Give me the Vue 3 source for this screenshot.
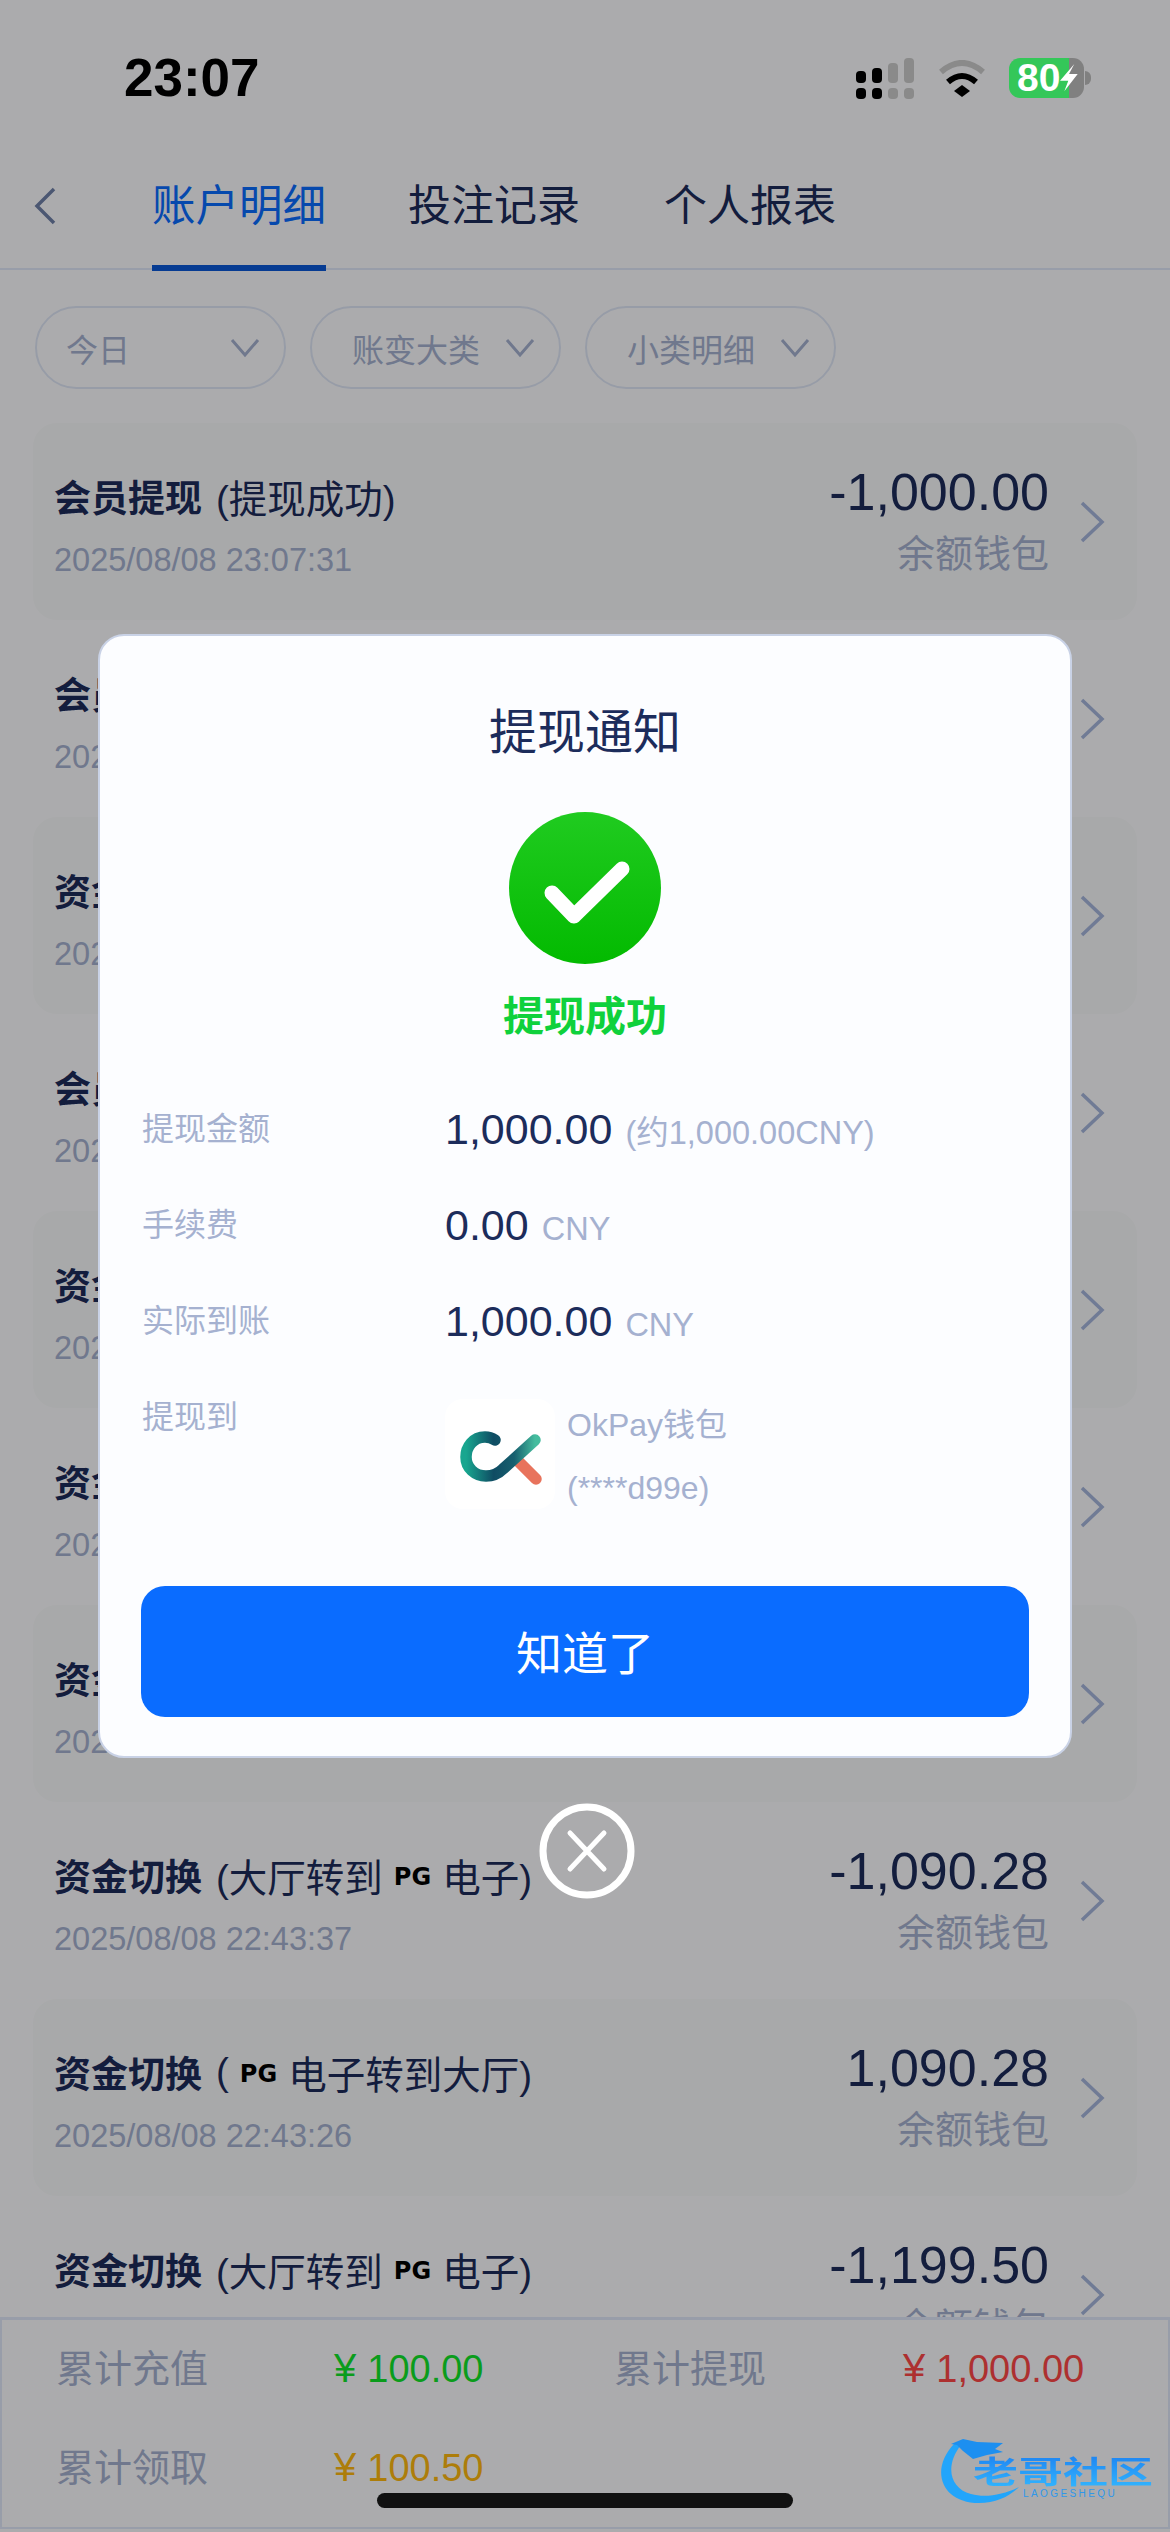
<script setup>
const tabs = ['账户明细', '投注记录', '个人报表']
const filters = ['今日', '账变大类', '小类明细']

const records = [
  { name: '会员提现', before: '(提现成功)', time: '2025/08/08 23:07:31', amount: '-1,000.00' },
  { name: '会员提现', before: '(提现成功)', time: '2025/08/08 22:58:12', amount: '-1,000.00' },
  { name: '资金切换', before: '(', pg: true, after: '电子转到大厅)', time: '2025/08/08 22:56:40', amount: '1,000.00' },
  { name: '会员提现', before: '(提现成功)', time: '2025/08/08 22:53:02', amount: '-1,000.00' },
  { name: '资金切换', before: '(大厅转到', pg: true, after: '电子)', time: '2025/08/08 22:49:51', amount: '-1,000.00' },
  { name: '资金切换', before: '(', pg: true, after: '电子转到大厅)', time: '2025/08/08 22:47:18', amount: '1,090.28' },
  { name: '资金切换', before: '(大厅转到', pg: true, after: '电子)', time: '2025/08/08 22:45:09', amount: '-1,090.28' },
  { name: '资金切换', before: '(大厅转到', pg: true, after: '电子)', time: '2025/08/08 22:43:37', amount: '-1,090.28' },
  { name: '资金切换', before: '(', pg: true, after: '电子转到大厅)', time: '2025/08/08 22:43:26', amount: '1,090.28' },
  { name: '资金切换', before: '(大厅转到', pg: true, after: '电子)', time: '2025/08/08 22:41:03', amount: '-1,199.50' }
]

const details = [
  { label: '提现金额', value: '1,000.00', unit: '(约1,000.00CNY)' },
  { label: '手续费', value: '0.00', unit: 'CNY' },
  { label: '实际到账', value: '1,000.00', unit: 'CNY' }
]
</script>

<template>
  <div class="page">
    <div class="status-bar">
      <span class="clock">23:07</span>
      <div class="status-icons">
        <div class="signal">
          <div v-for="n in 4" :key="n" class="signal-col" :class="['col-' + n]">
            <i></i><i></i>
          </div>
        </div>
        <svg class="wifi" width="50" height="37" viewBox="0 0 50 37">
          <path d="M4 12Q25 -6 46 12" fill="none" stroke="#8a8a8a" stroke-width="6" />
          <path d="M11 22Q25 10 39 22" fill="none" stroke="#000" stroke-width="6" />
          <path d="M17 31L25 25L33 31L25 37Z" fill="#000" />
        </svg>
        <div class="battery">
          <span class="battery-num">80</span>
          <svg class="bolt" width="18" height="28" viewBox="0 0 18 28">
            <path d="M14.3 0L0 16.7H8.3L4.3 27.3L17.7 10H9Z" fill="#fff" />
          </svg>
        </div>
        <i class="battery-nub"></i>
      </div>
    </div>

    <div class="tabs">
      <svg class="back" width="24" height="38" viewBox="0 0 24 38">
        <path d="M21 2L4 19L21 36" fill="none" stroke="#6f80a8" stroke-width="3.5" />
      </svg>
      <div v-for="(tab, i) in tabs" :key="tab" class="tab" :class="{ active: i === 0 }">{{ tab }}</div>
    </div>

    <div class="filters">
      <div v-for="item in filters" :key="item" class="pill">
        <span>{{ item }}</span>
        <svg width="30" height="20" viewBox="0 0 30 20">
          <path d="M2 2L15 17L28 2" fill="none" stroke="#a5b1d0" stroke-width="3" />
        </svg>
      </div>
    </div>

    <div class="records">
      <div v-for="(row, i) in records" :key="i" class="record">
        <div class="record-left">
          <div class="record-title">
            <b>{{ row.name }}</b>
            <span>{{ row.before }}</span>
            <span v-if="row.pg" class="pg">PG</span>
            <span v-if="row.after">{{ row.after }}</span>
          </div>
          <div class="record-time">{{ row.time }}</div>
        </div>
        <div class="record-right">
          <div class="record-amount">{{ row.amount }}</div>
          <div class="record-wallet">余额钱包</div>
        </div>
        <svg class="arrow" width="26" height="42" viewBox="0 0 26 42">
          <path d="M3 2L23 21L3 40" fill="none" stroke="#a5b5dc" stroke-width="3.5" />
        </svg>
      </div>
    </div>

    <div class="totals">
      <span class="total-label">累计充值</span>
      <span class="total-value green"><em>¥</em>100.00</span>
      <span class="total-label">累计提现</span>
      <span class="total-value red"><em>¥</em>1,000.00</span>
      <span class="total-label">累计领取</span>
      <span class="total-value orange"><em>¥</em>100.50</span>
    </div>

    <div class="mask">
      <div class="dialog">
        <div class="dialog-title">提现通知</div>
        <svg class="success-icon" width="152" height="152" viewBox="0 0 152 152">
          <defs>
            <linearGradient id="okGreen" x1="0" y1="0" x2="0" y2="1">
              <stop offset="0" stop-color="#20cb20" />
              <stop offset="1" stop-color="#03ba00" />
            </linearGradient>
          </defs>
          <circle cx="76" cy="76" r="76" fill="url(#okGreen)" />
          <path d="M43 81L65 104L113 57" fill="none" stroke="#fff" stroke-width="15" stroke-linecap="round" stroke-linejoin="round" />
        </svg>
        <div class="success-text">提现成功</div>

        <div class="detail-list">
          <div v-for="item in details" :key="item.label" class="detail-row">
            <div class="detail-label">{{ item.label }}</div>
            <div class="detail-value">
              <span class="num">{{ item.value }}</span>
              <span class="unit">{{ item.unit }}</span>
            </div>
          </div>
          <div class="detail-row wallet-row">
            <div class="detail-label">提现到</div>
            <div class="wallet">
              <div class="wallet-logo">
                <svg width="110" height="110" viewBox="0 0 110 110">
                  <defs>
                    <linearGradient id="ckTeal" x1="0" y1="0" x2="1" y2="0">
                      <stop offset="0" stop-color="#18a68f" />
                      <stop offset="0.4" stop-color="#0f4c63" />
                      <stop offset="0.7" stop-color="#17606f" />
                      <stop offset="1" stop-color="#45bc9e" />
                    </linearGradient>
                    <linearGradient id="ckRed" x1="0" y1="0" x2="0" y2="1">
                      <stop offset="0" stop-color="#ef8a6e" />
                      <stop offset="1" stop-color="#d0473a" />
                    </linearGradient>
                  </defs>
                  <path d="M63 37V80" fill="none" stroke="url(#ckRed)" stroke-width="11.5" stroke-linecap="round" />
                  <path d="M72 61L91 80" fill="none" stroke="#e8735c" stroke-width="11.5" stroke-linecap="round" />
                  <path d="M50 41C47 39 44 38 40 38C28 38 21 48 21 58C21 69 30 77 41 77C48 77 53 75 58 70L90 41" fill="none" stroke="url(#ckTeal)" stroke-width="11.5" stroke-linecap="round" />
                </svg>
              </div>
              <div class="wallet-text">
                <div>OkPay钱包</div>
                <div>(****d99e)</div>
              </div>
            </div>
          </div>
        </div>

        <button class="confirm" type="button">知道了</button>
      </div>

      <svg class="close" width="96" height="96" viewBox="0 0 96 96">
        <circle cx="48" cy="48" r="44" fill="none" stroke="#fff" stroke-width="7" />
        <path d="M31 30L65 66M65 30L31 66" fill="none" stroke="#fff" stroke-width="5" stroke-linecap="round" />
      </svg>
    </div>

    <div class="watermark">
      <svg class="dragon" width="100" height="80" viewBox="0 0 100 80">
        <path d="M22 8C-4 34 8 68 46 68C62 68 76 62 86 52C70 60 52 63 38 59C16 53 12 30 28 10Z" fill="#22a5fb" />
        <path d="M0 6L18 9L30 4L44 7L70 8L62 14L70 17L54 20L40 24L30 16L24 10Z" fill="#1c8ff0" />
      </svg>
      <div class="mark-name">老哥社区</div>
      <div class="mark-sub">LAOGESHEQU</div>
    </div>

    <div class="home-bar"></div>
  </div>
</template>

<style scoped>
.page {
  position: relative;
  width: 1170px;
  height: 2532px;
  overflow: hidden;
  background: #fdfdff;
  color: #1c2c5b;
  font-family: "Liberation Sans", "Noto Sans CJK SC", sans-serif;
}

.status-bar {
  position: relative;
  z-index: 20;
  height: 142px;
  box-sizing: border-box;
  display: flex;
  align-items: center;
  justify-content: space-between;
  padding: 14px 79px 0 124px;
}
.clock {
  margin-top: -2px;
  color: #000;
  font-size: 53px;
  font-weight: 700;
}
.status-icons {
  display: flex;
  align-items: center;
}
.signal {
  display: flex;
  gap: 6px;
  width: 58px;
  margin-right: 23px;
  height: 41px;
}
.signal-col {
  display: flex;
  flex-direction: column;
  justify-content: flex-end;
  gap: 5px;
  width: 10px;
}
.signal-col i {
  display: block;
  border-radius: 4px;
  height: 11px;
  background: #000;
}
.signal-col.col-3 i,
.signal-col.col-4 i {
  background: #8a8a8a;
}
.signal-col.col-1 i:first-child { height: 12px; }
.signal-col.col-2 i:first-child { height: 15px; }
.signal-col.col-3 i:first-child { height: 20px; }
.signal-col.col-4 i:first-child { height: 25px; }
.wifi {
  margin-right: 22px;
}
.battery {
  display: flex;
  align-items: center;
  width: 75px;
  height: 40px;
  padding-left: 8px;
  box-sizing: border-box;
  border-radius: 11px;
  background: linear-gradient(90deg, #34c759 80%, #808080 80%);
}
.battery-num {
  color: #fff;
  font-size: 39px;
  font-weight: 700;
  line-height: 40px;
}
.battery-nub {
  width: 6px;
  height: 14px;
  margin-left: 1px;
  border-radius: 0 7px 7px 0;
  background: #808080;
}

.tabs {
  position: relative;
  display: flex;
  gap: 84px;
  height: 126px;
  padding-left: 152px;
  border-bottom: 2px solid #e1e8fa;
}
.back {
  position: absolute;
  left: 33px;
  top: 45px;
}
.tab {
  height: 129px;
  box-sizing: border-box;
  padding-top: 34px;
  font-size: 43px;
  line-height: 60px;
}
.tab.active {
  width: 174px;
  margin-right: -2px;
  color: #0a6cff;
  font-size: 43.5px;
  border-bottom: 6px solid #0a58d8;
}

.filters {
  display: flex;
  gap: 24px;
  padding: 36px 0 0 35px;
}
.pill {
  display: flex;
  align-items: center;
  justify-content: space-between;
  box-sizing: border-box;
  width: 251px;
  height: 83px;
  padding: 0 24px 0 40px;
  border: 2px solid #dfe6f7;
  border-radius: 42px;
  color: #a5b1d0;
  font-size: 32px;
}
.pill:first-child {
  padding-left: 29px;
}

.records {
  margin: 34px 33px 0;
}
.record {
  display: flex;
  box-sizing: border-box;
  height: 197px;
  padding: 0 33px 0 21px;
  border-radius: 24px;
}
.record:nth-child(odd) {
  background: #f8f9fb;
}
.record-left {
  flex: 1;
  padding-top: 48px;
}
.record-title {
  display: flex;
  align-items: center;
  height: 50px;
  font-size: 38.5px;
  white-space: nowrap;
}
.record-title b {
  margin-right: 14px;
  font-size: 37px;
  font-weight: 700;
}
.pg {
  margin: 4px 11px 0;
  color: #000;
  font-family: "DejaVu Sans", sans-serif;
  font-size: 24px;
  font-weight: 700;
}
.record-time {
  margin-top: 19px;
  color: #a5b1d0;
  font-size: 32.5px;
  line-height: 40px;
}
.record-right {
  padding-top: 39px;
  text-align: right;
}
.record-amount {
  font-size: 52px;
  line-height: 60px;
}
.record-wallet {
  margin-top: 12px;
  color: #a5b1d0;
  font-size: 38px;
  line-height: 40px;
}
.arrow {
  align-self: center;
  margin-left: 30px;
  margin-right: -1px;
}

.totals {
  position: absolute;
  left: 0;
  right: 0;
  bottom: 3px;
  display: grid;
  grid-template-columns: 278px 280px 289px 1fr;
  grid-auto-rows: 91px;
  row-gap: 8px;
  align-items: center;
  box-sizing: border-box;
  height: 212px;
  padding: 0 0 0 54px;
  border: 2px solid #e1e8fa;
  border-top-width: 3px;
  background: #fdfdff;
  font-size: 38px;
}
.total-label {
  color: #a5b1d0;
}
.total-value {
  margin-top: 6px;
}
.total-value em {
  margin-right: 11px;
  font-style: normal;
  font-size: 40px;
}
.green { color: #10e62a; }
.red { color: #ff4848; }
.orange { color: #ffb90f; }

.mask {
  position: absolute;
  inset: 0;
  z-index: 10;
  display: flex;
  flex-direction: column;
  align-items: center;
  padding-top: 634px;
  background: rgba(0, 0, 0, 0.32);
}
.dialog {
  display: flex;
  flex-direction: column;
  align-items: center;
  box-sizing: border-box;
  width: 974px;
  height: 1124px;
  padding: 65px 41px 0;
  border: 2px solid #c9d2e6;
  border-radius: 26px;
  background: #fcfdff;
}
.dialog-title {
  font-size: 48px;
  line-height: 64px;
}
.success-icon {
  margin-top: 47px;
  flex: none;
}
.success-text {
  margin-top: 28px;
  color: #0fd13c;
  font-size: 41px;
  font-weight: 700;
  line-height: 50px;
}
.detail-list {
  align-self: stretch;
  display: flex;
  flex-direction: column;
  gap: 32px;
  margin-top: 55px;
}
.detail-row {
  display: flex;
  height: 64px;
}
.detail-row.wallet-row {
  height: auto;
}
.detail-label {
  width: 304px;
  padding-left: 1px;
  box-sizing: border-box;
  color: #a5b1d0;
  font-size: 32px;
  line-height: 64px;
}
.detail-value {
  display: flex;
  align-items: baseline;
  gap: 13px;
  height: 64px;
  line-height: 64px;
}
.num {
  font-size: 43px;
}
.unit {
  color: #a5b1d0;
  font-size: 32.5px;
}
.wallet {
  display: flex;
  gap: 12px;
}
.wallet-logo {
  width: 110px;
  height: 110px;
  margin-top: 14px;
  border-radius: 18px;
  background: #fff;
}
.wallet-logo svg {
  display: block;
}
.wallet-text {
  margin-top: 9px;
  color: #a5b1d0;
  font-size: 32px;
  line-height: 63px;
}
.confirm {
  align-self: stretch;
  height: 131px;
  margin-top: 66px;
  padding: 0 0 4px;
  border: 0;
  border-radius: 24px;
  background: #0a6cff;
  color: #fff;
  font-family: inherit;
  font-size: 46px;
}
.close {
  margin-top: 45px;
  margin-left: 3px;
}

.watermark {
  position: absolute;
  z-index: 20;
  left: 933px;
  top: 2435px;
  width: 225px;
  height: 80px;
}
.dragon {
  position: absolute;
  left: 0;
  top: 0;
}
.mark-name {
  position: absolute;
  left: 40px;
  top: 13px;
  font-size: 45px;
  font-weight: 700;
  line-height: 50px;
  white-space: nowrap;
  transform: scaleY(0.68);
  background: linear-gradient(#1f86f2, #33b8ff);
  -webkit-background-clip: text;
  background-clip: text;
  color: transparent;
}
.mark-sub {
  position: absolute;
  left: 90px;
  top: 53px;
  color: #2f97ea;
  font-size: 10px;
  letter-spacing: 2.4px;
  white-space: nowrap;
}
.home-bar {
  position: absolute;
  z-index: 20;
  left: 377px;
  top: 2493px;
  width: 416px;
  height: 15px;
  border-radius: 8px;
  background: #111;
}
</style>

<style>
body {
  margin: 0;
}
</style>
